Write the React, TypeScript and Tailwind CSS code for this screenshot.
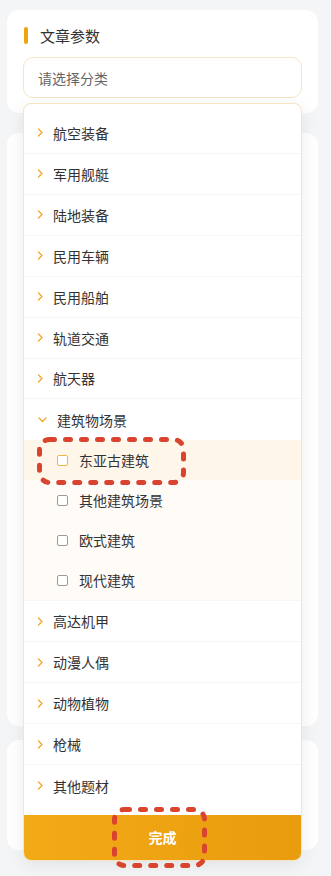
import React from "react";

const font = { fontFamily: '"Noto Sans CJK SC", "Noto Sans", sans-serif' };

function ChevronRight() {
  return (
    <svg width="7" height="9" viewBox="0 0 7 9" className="shrink-0">
      <polyline points="1.5,1 5,4.5 1.5,8" fill="none" stroke="#f3a52a" strokeWidth="1.3" strokeLinecap="round" strokeLinejoin="round" />
    </svg>
  );
}

function ChevronDown() {
  return (
    <svg width="9" height="6" viewBox="0 0 9 6" className="shrink-0">
      <polyline points="1,1 4.5,4.5 8,1" fill="none" stroke="#f3a52a" strokeWidth="1.3" strokeLinecap="round" strokeLinejoin="round" />
    </svg>
  );
}

function Row({ label, last }: { label: string; last?: boolean }) {
  return (
    <div className={`flex h-[41px] items-center pl-[13px] ${last ? "" : "border-b border-[#f6f6f6]"}`}>
      <div className="w-[16px]">
        <ChevronRight />
      </div>
      <span className="text-[14px] leading-none text-[#333]">{label}</span>
    </div>
  );
}

function Child({ label, active }: { label: string; active?: boolean }) {
  return (
    <div className={`flex h-[40px] items-center pl-[33px] ${active ? "bg-[#fff6ea]" : ""}`}>
      <div className={`h-[11px] w-[11px] rounded-[2px] border ${active ? "border-[#f2b545]" : "border-[#9a9a9a]"} bg-white`} />
      <span className="ml-[11px] text-[14px] leading-none text-[#333]">{label}</span>
    </div>
  );
}

function Dashed({ left, top, w, h }: { left: number; top: number; w: number; h: number }) {
  return (
    <svg className="pointer-events-none absolute" style={{ left, top }} width={w} height={h} viewBox={`0 0 ${w} ${h}`}>
      <rect x="2.5" y="2.5" width={w - 5} height={h - 5} rx="10" fill="none" stroke="#d9442f" strokeWidth="5" strokeDasharray="5 11" strokeLinecap="round" />
    </svg>
  );
}

export default function App() {
  const top = ["航空装备", "军用舰艇", "陆地装备", "民用车辆", "民用船舶", "轨道交通", "航天器"];
  const bottom = ["高达机甲", "动漫人偶", "动物植物", "枪械", "其他题材"];
  return (
    <div className="relative min-h-[876px] overflow-hidden bg-[#f4f5f7] pl-[7px] pr-[13px] pt-[10px]" style={font}>
      <div className="h-[103px] rounded-[12px] bg-white px-[16px] pt-[17px]">
        <div className="flex h-[17px] items-center">
          <div className="ml-[1px] h-[17px] w-[4px] rounded-[2px] bg-[#f0a30a]" />
          <span className="ml-[12px] text-[15px] font-normal leading-none text-[#333]">文章参数</span>
        </div>
        <div className="mt-[13px] flex h-[41px] items-center rounded-[10px] border border-[#f6e5c6] bg-white pl-[14px]">
          <span className="text-[14px] leading-none text-[#666]">请选择分类</span>
        </div>
      </div>
      <div className="mt-[20px] h-[593px] rounded-[12px] bg-white" />
      <div className="mt-[14px] h-[110px] rounded-[12px] bg-white" />

      <div className="absolute left-[23px] top-[103px] flex h-[758px] w-[279px] flex-col overflow-hidden rounded-[8px] border border-[#f6e4c4] bg-white pt-[9px] shadow-[0_4px_18px_rgba(0,0,0,0.08)]">
        {top.map((t) => (
          <Row key={t} label={t} />
        ))}
        <div className="flex h-[41px] items-center pl-[14px]">
          <ChevronDown />
          <span className="ml-[10px] text-[14px] leading-none text-[#333]">建筑物场景</span>
        </div>
        <div className="border-b border-[#f6f6f6] bg-[#fffcf8]">
          <Child label="东亚古建筑" active />
          <Child label="其他建筑场景" />
          <Child label="欧式建筑" />
          <Child label="现代建筑" />
        </div>
        {bottom.map((t, i) => (
          <Row key={t} label={t} last={i === bottom.length - 1} />
        ))}
        <div className="mt-[9px] flex h-[45px] shrink-0 items-center justify-center bg-gradient-to-r from-[#f3aa17] to-[#e99c0e]">
          <span className="text-[14px] font-bold leading-none text-white">完成</span>
        </div>
      </div>

      <Dashed left={37} top={437} w={149} h={48} />
      <Dashed left={112} top={807} w={95} h={61} />
    </div>
  );
}
